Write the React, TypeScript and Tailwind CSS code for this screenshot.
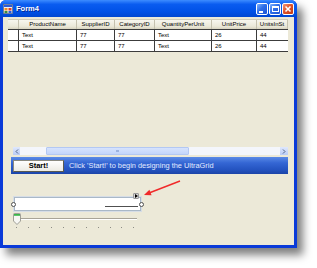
import React from "react";

const cols = [
  { w: 58, name: "ProductName", v: "Text" },
  { w: 38, name: "SupplierID", v: "77" },
  { w: 40, name: "CategoryID", v: "77" },
  { w: 57, name: "QuantityPerUnit", v: "Text" },
  { w: 45, name: "UnitPrice", v: "26" },
  { w: 31, name: "UnitsInSt", v: "44" },
];

function TitleButton({ kind }: { kind: "min" | "max" | "close" }) {
  const bg =
    kind === "close"
      ? "bg-[linear-gradient(135deg,#f29a7c_0%,#e0542a_45%,#c23a10_100%)]"
      : "bg-[linear-gradient(135deg,#7fb2ff_0%,#2f6fe8_45%,#1c52d4_100%)]";
  return (
    <div className={`w-[12px] h-[12px] rounded-[2px] border border-white ${bg} flex items-center justify-center`}>
      {kind === "min" && <div className="w-[4px] h-[2px] bg-white mt-[5px] -ml-[3px]" />}
      {kind === "max" && <div className="w-[7px] h-[6px] border border-white border-t-2" />}
      {kind === "close" && (
        <svg width="8" height="8" viewBox="0 0 8 8">
          <path d="M1.5 1.5 L6.5 6.5 M6.5 1.5 L1.5 6.5" stroke="white" strokeWidth="1.6" />
        </svg>
      )}
    </div>
  );
}

export default function App() {
  const ticks = Array.from({ length: 11 });
  return (
    <div className="w-[317px] h-[268px] bg-white relative overflow-hidden font-['Liberation_Sans',Arial,sans-serif]">
      {/* Window */}
      <div className="w-[297px] h-[248px] flex flex-col rounded-t-[6px] bg-[#0a3ad8] shadow-[6px_7px_9px_rgba(0,0,0,0.5)]">
        {/* Title bar */}
        <div className="h-[17px] rounded-t-[6px] bg-[linear-gradient(180deg,#3d8cff_0%,#0a5cf0_25%,#0050e6_70%,#0046d0_100%)] flex items-center pl-[3px] pr-[3px]">
          <svg width="10" height="10" viewBox="0 0 10 10" className="shrink-0">
            <rect x="0.5" y="0.5" width="9" height="9" fill="#f2f2f2" stroke="#6a6a6a" strokeWidth="0.6" />
            <rect x="1" y="1" width="8" height="2" fill="#2a5bd8" />
            <rect x="1.5" y="4" width="3" height="2.5" fill="#f08a20" />
            <rect x="5.5" y="4" width="3" height="2.5" fill="#e0402a" />
            <rect x="1.5" y="7" width="3" height="2" fill="#3a8a3a" />
            <rect x="5.5" y="7" width="3" height="2" fill="#2a5bd8" />
          </svg>
          <span className="ml-[3px] text-white font-bold text-[7.5px] leading-none [text-shadow:1px_1px_0_#0a2a90]">Form4</span>
          <div className="ml-auto flex gap-[1px] mt-[1px]">
            <TitleButton kind="min" />
            <TitleButton kind="max" />
            <TitleButton kind="close" />
          </div>
        </div>
        {/* Client */}
        <div className="flex-1 mx-[3px] mb-[3px] bg-[#ece9d8] relative flex flex-col">
          {/* Grid */}
          <div className="ml-[5px] mt-[2px] w-[280px] h-[137px] flex flex-col">
            {/* header */}
            <div className="flex h-[10px] bg-[linear-gradient(180deg,#f7f6ee_0%,#ebe8d8_70%,#d8d4c0_100%)] border-t border-[#cfcbb8]">
              <div className="w-[11px] border-r border-[#c5c1ae]" />
              {cols.map((c) => (
                <div
                  key={c.name}
                  style={{ width: c.w }}
                  className="border-r border-[#c5c1ae] text-[6px] leading-[9px] text-center text-black whitespace-nowrap overflow-hidden"
                >
                  {c.name}
                </div>
              ))}
            </div>
            {[0, 1].map((r) => (
              <div key={r} className="flex h-[11px] bg-white border-t border-[#3c3c3c]">
                <div className="w-[11px] border-r border-[#3c3c3c]" />
                {cols.map((c, i) => (
                  <div
                    key={c.name}
                    style={{ width: c.w }}
                    className={`${i < cols.length - 1 ? "border-r border-[#3c3c3c]" : ""} text-[6px] leading-[10px] pl-[3px] text-black whitespace-nowrap overflow-hidden`}
                  >
                    {c.v}
                  </div>
                ))}
              </div>
            ))}
            <div className="border-t border-[#3c3c3c] w-full" />
            <div className="flex-1" />
            {/* horizontal scrollbar */}
            <div className="ml-[5px] h-[8px] flex bg-[#f4f6fb] mb-[1px]">
              <div className="w-[7px] h-[8px] bg-[linear-gradient(180deg,#dfe8fd,#b9ccf6)] flex items-center justify-center">
                <svg width="4" height="5" viewBox="0 0 4 5"><path d="M3 0.5 L1 2.5 L3 4.5" stroke="#4d6185" strokeWidth="1" fill="none" /></svg>
              </div>
              <div className="w-[26px]" />
              <div className="w-[143px] h-[8px] bg-[linear-gradient(180deg,#d6e3fd,#c3d5fb)] border border-[#b3c8f3] rounded-[1px] flex items-center justify-center">
                <div className="w-[3px] h-[2px] border-y border-[#9db3e0]" />
              </div>
              <div className="flex-1" />
              <div className="w-[8px] h-[8px] bg-[linear-gradient(180deg,#dfe8fd,#b9ccf6)] flex items-center justify-center">
                <svg width="4" height="5" viewBox="0 0 4 5"><path d="M1 0.5 L3 2.5 L1 4.5" stroke="#4d6185" strokeWidth="1" fill="none" /></svg>
              </div>
            </div>
          </div>
          {/* Banner */}
          <div className="ml-[8px] mt-[1px] w-[277px] h-[17px] bg-[linear-gradient(180deg,#5a8ae6_0%,#3466d4_35%,#2453c0_75%,#1b44a8_100%)] flex items-center pl-[2px]">
            <div className="w-[51px] h-[12px] bg-[linear-gradient(180deg,#ffffff,#ecebe4)] border border-[#8a8a80] border-r-[#5a5a50] border-b-[#5a5a50] flex items-center justify-center text-[7.5px] font-bold text-black leading-none">
              Start!
            </div>
            <span className="ml-[5px] text-[7.4px] text-[#e4ecff] leading-none whitespace-nowrap">
              Click 'Start!' to begin designing the UltraGrid
            </span>
          </div>
          {/* Textbox */}
          <div className="ml-[11px] mt-[23px] w-[127px] h-[14px] bg-white border border-[#a9b8c8] outline outline-1 outline-[#d6dde6] flex items-end justify-end pr-[2px] pb-[3px]">
            <div className="w-[33px] h-[1px] bg-[#505050]" />
          </div>
          {/* Trackbar */}
          <div className="ml-[10px] mt-[2px] w-[124px] relative h-[18px]">
            <div className="absolute left-[7px] right-[0px] top-[5px] h-[2px] border-t border-[#a8a498] border-b border-b-white" />
            <svg className="absolute left-[0px] top-[0px]" width="8" height="12" viewBox="0 0 8 12">
              <path d="M0.5 1.5 Q0.5 0.5 1.5 0.5 L6.5 0.5 Q7.5 0.5 7.5 1.5 L7.5 8 L4 11.5 L0.5 8 Z" fill="#f7f7f3" stroke="#8c8c84" strokeWidth="0.8" />
              <rect x="1" y="1" width="6" height="1.8" fill="#3bb54a" />
            </svg>
            <div className="absolute left-[3px] top-[14px] flex gap-[10.7px]">
              {ticks.map((_, i) => (
                <div key={i} className="w-[1px] h-[1px] bg-[#8c8c84]" />
              ))}
            </div>
          </div>
        </div>
      </div>
      {/* designer handles */}
      <div className="absolute left-[11px] top-[202px] w-[5px] h-[5px] rounded-full bg-white border border-[#505050]" />
      <div className="absolute left-[139px] top-[202px] w-[5px] h-[5px] rounded-full bg-white border border-[#505050]" />
      {/* smart tag */}
      <div className="absolute left-[133px] top-[193px] w-[6px] h-[6px] rounded-[1px] bg-[#d8d8d8] border border-[#9a9a9a] flex items-center justify-center">
        <svg width="3" height="4" viewBox="0 0 3 4"><path d="M0 0 L3 2 L0 4 Z" fill="#000" /></svg>
      </div>
      {/* red arrow */}
      <svg className="absolute left-[140px] top-[178px]" width="44" height="20" viewBox="0 0 44 20">
        <line x1="40" y1="3" x2="9" y2="15" stroke="#f02a2a" strokeWidth="1.4" />
        <polygon points="4,17 11.6,17.3 9.4,11.7" fill="#f02a2a" />
      </svg>
    </div>
  );
}
